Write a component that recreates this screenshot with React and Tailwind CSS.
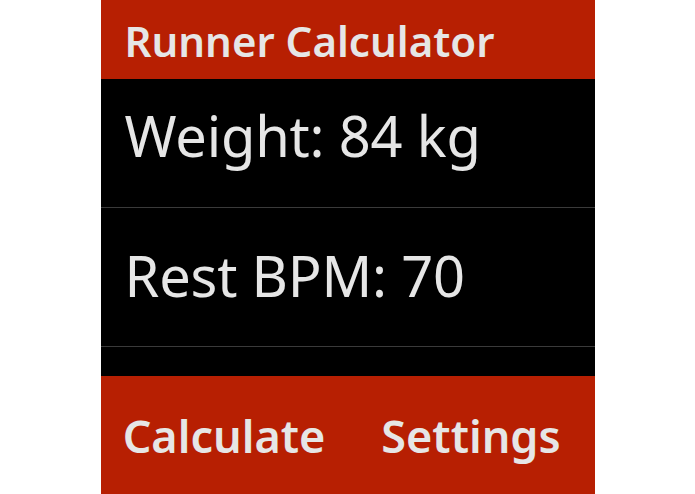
import React from 'react';

const fields = [
    { label: 'Weight', value: '84 kg', row: 'h-[129px] pt-[28px]' },
    { label: 'Rest BPM', value: '70', row: 'h-[139px] pt-[39px]' },
];

const App = () => {
    return (
        <div className="w-[695px] h-[494px] bg-white flex justify-center" style={{ fontFamily: '"Noto Sans", "Open Sans", sans-serif' }}>
            <div className="w-[494px] h-[494px] bg-black flex flex-col text-[#e6e6e6]">
                {/* Title bar */}
                <div className="h-[79px] shrink-0 bg-[#b71f02] flex items-center pl-[24px] pt-[2px]">
                    <h1 className="text-[42px] font-semibold leading-none">Runner Calculator</h1>
                </div>

                {/* Input rows */}
                <div className="flex-1 overflow-hidden">
                    {fields.map((f) => (
                        <div key={f.label} className={`${f.row} border-b border-[#3a3a3a] pl-[24px]`}>
                            <span className="block text-[56px] leading-none tracking-[-0.2px]">{f.label}: {f.value}</span>
                        </div>
                    ))}
                </div>

                {/* Action bar */}
                <div className="h-[118px] shrink-0 bg-[#b71f02] grid grid-cols-2">
                    <button className="flex items-center justify-center text-[45px] font-semibold leading-none">Calculate</button>
                    <button className="flex items-center justify-center text-[45px] font-semibold leading-none">Settings</button>
                </div>
            </div>
        </div>
    );
};

export default App;
